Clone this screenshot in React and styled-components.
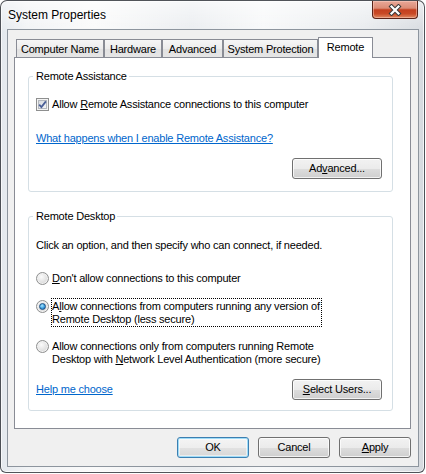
import React from 'react';
import styled, { createGlobalStyle, css } from 'styled-components';

const GlobalStyle = createGlobalStyle`
  html, body {
    margin: 0;
    padding: 0;
    background: #fff;
  }
  body {
    font-family: 'Liberation Sans', Arial, sans-serif;
  }
`;

const Window = styled.div`
  box-sizing: border-box;
  width: 425px;
  height: 473px;
  border: 1px solid rgba(40, 44, 50, 0.8);
  border-radius: 7px 7px 6px 6px;
  padding: 0 5px 5px 6px;
  display: flex;
  flex-direction: column;
  background:
    linear-gradient(180deg, rgba(255, 255, 255, 0.55), rgba(255, 255, 255, 0) 32px),
    linear-gradient(90deg, #e3e8ed 0%, #f1f3f5 6%, #fafafa 22%, #eaedf0 45%, #f7f8f9 62%, #e8ebee 86%, #d6dadf 100%);
  box-shadow: inset 0 0 0 1px rgba(255, 255, 255, 0.7);
  font-size: 11px;
  line-height: 13px;
  letter-spacing: -0.2px;
  color: #000;
`;

const TitleBar = styled.div`
  height: 28px;
  display: flex;
  align-items: center;
  justify-content: space-between;
  padding-left: 1px;
`;

const Title = styled.span`
  font-size: 12px;
  letter-spacing: 0;
  text-shadow: 0 0 8px #fff, 0 0 4px #fff;
`;

const CloseButton = styled.div`
  align-self: flex-start;
  box-sizing: border-box;
  width: 46px;
  height: 18px;
  margin-right: 1px;
  border: 1px solid #5a2318;
  border-top: none;
  border-radius: 0 0 4px 4px;
  background: linear-gradient(180deg, #e9a898 0%, #dc8c76 42%, #c4401f 52%, #c94a26 75%, #e08a62 100%);
  box-shadow: inset 0 0 0 1px rgba(255, 215, 205, 0.45);
  display: flex;
  align-items: center;
  justify-content: center;
`;

const Client = styled.div`
  flex: 1;
  box-sizing: border-box;
  border: 1px solid #8d959e;
  background: #f0f0f0;
  padding: 7px 7px 8px 6px;
  display: flex;
  flex-direction: column;
`;

const TabStrip = styled.div`
  height: 20px;
  padding-left: 2px;
  display: flex;
  align-items: flex-end;
`;

const Tab = styled.div`
  box-sizing: border-box;
  width: ${p => p.$w}px;
  height: 18px;
  padding-top: 1px;
  border: 1px solid #898c95;
  border-bottom: none;
  background: linear-gradient(180deg, #f6f6f6 0%, #ececec 50%, #e2e2e2 51%, #e6e6e6 100%);
  display: flex;
  align-items: center;
  justify-content: center;
  white-space: nowrap;

  ${p => p.$active && css`
    height: 21px;
    margin-bottom: -1px;
    padding: 0 0 2px;
    background: #fff;
    position: relative;
    z-index: 1;
  `}
`;

const Panel = styled.div`
  box-sizing: border-box;
  height: 372px;
  border: 1px solid #898c95;
  background: #fff;
  padding: 12px 0 0 13px;
`;

const Group = styled.fieldset`
  box-sizing: border-box;
  width: 365px;
  min-width: 0;
  margin: ${p => p.$mt}px 0 0;
  padding: ${p => p.$pt}px 10px ${p => p.$pb}px 7px;
  border: 1px solid #d5dfe5;
  border-radius: 3px;
`;

const Legend = styled.legend`
  margin-left: -3px;
  padding: 0 2px 0 3px;
  line-height: 13px;
`;

const CheckRow = styled.label`
  display: flex;
  align-items: center;
  gap: 3px;
  height: 13px;
`;

const CheckBox = styled.span`
  box-sizing: border-box;
  flex: none;
  width: 13px;
  height: 13px;
  border: 1px solid #8e8f8f;
  background: linear-gradient(135deg, #cfd3d9 0%, #eef0f2 70%, #f8f8f8 100%);
  box-shadow: inset 0 0 0 1px #f4f4f4, inset 0 0 0 2px #b4b8be;
  display: flex;
  align-items: center;
  justify-content: center;
`;

const Key = styled.span`
  text-decoration: underline;
`;

const Link = styled.a`
  display: inline-block;
  margin-top: ${p => p.$mt || 0}px;
  color: #0066cc;
  text-decoration: underline;
  cursor: pointer;
`;

const RightRow = styled.div`
  display: flex;
  justify-content: flex-end;
  margin-top: 13px;
`;

const Button = styled.div`
  box-sizing: border-box;
  width: ${p => p.$w}px;
  height: 21px;
  border: 1px solid #707070;
  border-radius: 3px;
  background: linear-gradient(180deg, #f2f2f2 0%, #ebebeb 50%, #dddddd 51%, #cfcfcf 100%);
  box-shadow: inset 0 0 0 1px rgba(255, 255, 255, 0.75);
  display: flex;
  align-items: center;
  justify-content: center;

  ${p => p.$default && css`
    border-color: #3c7fb1;
    background: linear-gradient(180deg, #f4f4f4 0%, #eeeeee 50%, #e2e2e2 51%, #d6d6d6 100%);
    box-shadow: inset 0 0 0 1px #9fdcf8, inset 0 0 0 2px rgba(255, 255, 255, 0.5);
  `}
`;

const Description = styled.div`
  line-height: 13px;
`;

const Option = styled.label`
  display: flex;
  align-items: flex-start;
  gap: 2px;
  margin-top: ${p => p.$mt}px;
`;

const Radio = styled.span`
  box-sizing: border-box;
  flex: none;
  width: 13px;
  height: 13px;
  margin-top: 2px;
  border-radius: 50%;
  border: 1px solid #8e8f8f;
  background: radial-gradient(circle at 40% 35%, #fbfbfb 0%, #e2e2e2 55%, #c8c8c8 100%);
  box-shadow: inset 0 0 0 1px #f2f2f2;
  display: flex;
  align-items: center;
  justify-content: center;

  ${p => p.$on && css`
    &::after {
      content: '';
      box-sizing: border-box;
      width: 7px;
      height: 7px;
      border-radius: 50%;
      border: 1px solid #1d4f82;
      background: radial-gradient(circle at 40% 35%, #a9e6ff 0%, #3a9ee0 55%, #1c5b9d 100%);
    }
  `}
`;

const OptionText = styled.span`
  display: inline-block;
  padding: 1px 1px 0 0;
  border: 1px dotted ${p => (p.$focus ? '#000' : 'transparent')};
  line-height: 13px;
`;

const SpreadRow = styled.div`
  display: flex;
  justify-content: space-between;
  align-items: center;
  margin-top: 12px;
`;

const ButtonBar = styled.div`
  display: flex;
  justify-content: flex-end;
  gap: 9px;
  margin-top: 8px;
`;

const CloseGlyph = () => (
  <svg width="14" height="12" viewBox="0 0 14 12">
    <path d="M3.5 2.5L10.5 9.5M10.5 2.5L3.5 9.5" stroke="#3a3a3a" strokeWidth="4.2" strokeLinecap="square" fill="none" />
    <path d="M3.5 2.5L10.5 9.5M10.5 2.5L3.5 9.5" stroke="#fff" strokeWidth="2.2" strokeLinecap="square" fill="none" />
  </svg>
);

const CheckMark = () => (
  <svg width="11" height="11" viewBox="0 0 11 11">
    <path d="M2.2 5.6L4.4 8L8.9 2.4" stroke="#4a5f97" strokeWidth="1.8" fill="none" />
  </svg>
);

const tabs = [
  { label: 'Computer Name', w: 88 },
  { label: 'Hardware', w: 58 },
  { label: 'Advanced', w: 61 },
  { label: 'System Protection', w: 95 },
  { label: 'Remote', w: 55, active: true },
];

const App = () => {
  return (
    <>
      <GlobalStyle />
      <Window>
        <TitleBar>
          <Title>System Properties</Title>
          <CloseButton>
            <CloseGlyph />
          </CloseButton>
        </TitleBar>
        <Client>
          <TabStrip>
            {tabs.map(t => (
              <Tab key={t.label} $w={t.w} $active={t.active}>{t.label}</Tab>
            ))}
          </TabStrip>
          <Panel>
            <Group $mt={0} $pt={15} $pb={12}>
              <Legend>Remote Assistance</Legend>
              <CheckRow>
                <CheckBox>
                  <CheckMark />
                </CheckBox>
                <span>Allow <Key>R</Key>emote Assistance connections to this computer</span>
              </CheckRow>
              <Link $mt={21}>What happens when I enable Remote Assistance?</Link>
              <RightRow>
                <Button $w={90}>Ad<Key>v</Key>anced...</Button>
              </RightRow>
            </Group>
            <Group $mt={18} $pt={16} $pb={10}>
              <Legend>Remote Desktop</Legend>
              <Description>Click an option, and then specify who can connect, if needed.</Description>
              <Option $mt={18}>
                <Radio />
                <OptionText><Key>D</Key>on't allow connections to this computer</OptionText>
              </Option>
              <Option $mt={12}>
                <Radio $on />
                <OptionText $focus>
                  A<Key>l</Key>low connections from computers running any version of
                  <br />
                  Remote Desktop (less secure)
                </OptionText>
              </Option>
              <Option $mt={11}>
                <Radio />
                <OptionText>
                  Allow connections only from computers running Remote
                  <br />
                  Desktop with <Key>N</Key>etwork Level Authentication (more secure)
                </OptionText>
              </Option>
              <SpreadRow>
                <Link>Help me choose</Link>
                <Button $w={90}><Key>S</Key>elect Users...</Button>
              </SpreadRow>
            </Group>
          </Panel>
          <ButtonBar>
            <Button $w={72} $default>OK</Button>
            <Button $w={72}>Cancel</Button>
            <Button $w={72}><Key>A</Key>pply</Button>
          </ButtonBar>
        </Client>
      </Window>
    </>
  );
};

export default App;
